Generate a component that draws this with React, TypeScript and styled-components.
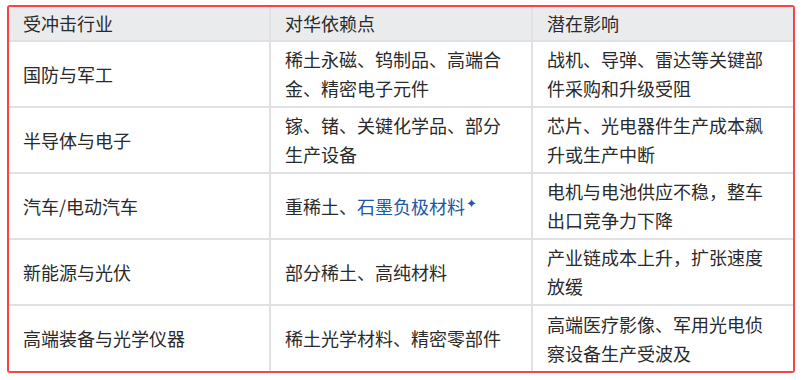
import React from "react";
import styled, { createGlobalStyle } from "styled-components";

const Global = createGlobalStyle`
  html, body { margin: 0; padding: 0; background: #ffffff; }
  body { font-family: "Noto Sans CJK SC", "Noto Sans", sans-serif; }
`;

const Frame = styled.div`
  margin: 5px 0 0 7px;
  width: 784px;
  border: 2px solid #f54545;
  border-radius: 3px;
  overflow: hidden;
`;

const Table = styled.div`
  display: grid;
  grid-template-columns: 262px 262px 260px;
  background: #ffffff;
`;

const Cell = styled.div<{ $head?: boolean; $last?: boolean }>`
  box-sizing: border-box;
  display: flex;
  align-items: center;
  padding: 0 14px;
  height: ${(p) => (p.$head ? "35px" : "66px")};
  background: ${(p) => (p.$head ? "#eaebed" : "#ffffff")};
  border-right: ${(p) => (p.$last ? "none" : "2px solid #e1e1e3")};
  border-bottom: 2px solid #e1e1e3;
  font-size: 18px;
  line-height: 29px;
  color: #2a2a2a;
  &:nth-last-child(-n + 3) {
    border-bottom: none;
    height: 65px;
  }
`;

const Text = styled.span`
  display: block;
`;

const Link = styled.span`
  color: #2157a6;
`;

const Spark = styled.sup`
  font-size: 13px;
  line-height: 0;
  vertical-align: 6px;
  margin-left: 1px;
  color: #2157a6;
`;

type Row = [React.ReactNode, React.ReactNode, React.ReactNode];

const head: Row = ["受冲击行业", "对华依赖点", "潜在影响"];

const rows: Row[] = [
  ["国防与军工", "稀土永磁、钨制品、高端合金、精密电子元件", "战机、导弹、雷达等关键部件采购和升级受阻"],
  ["半导体与电子", "镓、锗、关键化学品、部分生产设备", "芯片、光电器件生产成本飙升或生产中断"],
  [
    "汽车/电动汽车",
    <>
      重稀土、<Link>石墨负极材料</Link>
      <Spark>✦</Spark>
    </>,
    "电机与电池供应不稳，整车出口竞争力下降",
  ],
  ["新能源与光伏", "部分稀土、高纯材料", "产业链成本上升，扩张速度放缓"],
  ["高端装备与光学仪器", "稀土光学材料、精密零部件", "高端医疗影像、军用光电侦察设备生产受波及"],
];

export default function App() {
  return (
    <>
      <Global />
      <Frame>
        <Table>
          {head.map((h, i) => (
            <Cell key={`h${i}`} $head $last={i === 2}>
              <Text>{h}</Text>
            </Cell>
          ))}
          {rows.map((r, ri) =>
            r.map((c, ci) => (
              <Cell key={`${ri}-${ci}`} $last={ci === 2}>
                <Text>{c}</Text>
              </Cell>
            ))
          )}
        </Table>
      </Frame>
    </>
  );
}
